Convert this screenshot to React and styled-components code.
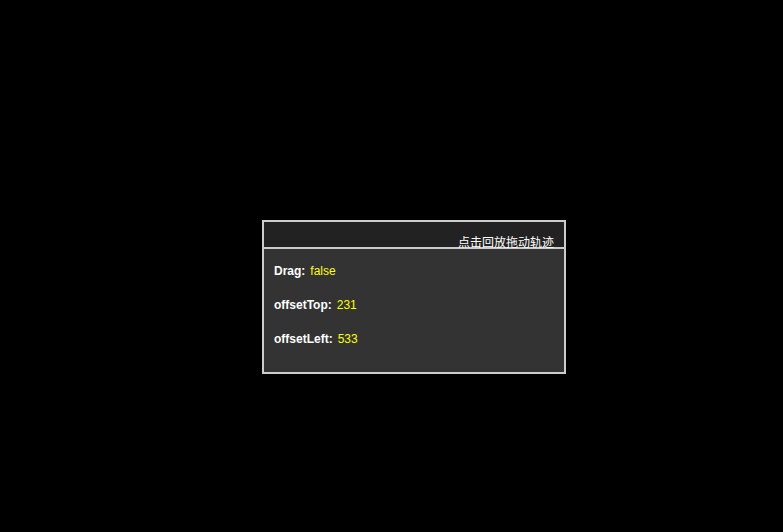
import React from "react";
import styled, { createGlobalStyle } from "styled-components";

const GlobalStyle = createGlobalStyle`
  html, body {
    margin: 0;
    padding: 0;
    background: #000;
    height: 100%;
  }
  body {
    font-family: "Liberation Sans", Arial, "Noto Sans CJK SC", sans-serif;
    font-size: 12px;
  }
`;

const Stage = styled.div`
  position: relative;
  width: 783px;
  height: 532px;
  background: #000;
  overflow: hidden;
`;

const Panel = styled.div`
  position: absolute;
  left: 262px;
  top: 220px;
  width: 300px;
  border: 2px solid #ccc;
  display: flex;
  flex-direction: column;
`;

const Header = styled.div`
  height: 25px;
  background: #222;
  border-bottom: 2px solid #ccc;
  display: flex;
  justify-content: flex-end;
  align-items: flex-end;
  padding-right: 10px;
`;

const Replay = styled.span`
  font-family: "Noto Sans CJK SC", sans-serif;
  font-size: 12px;
  line-height: 12px;
  color: #fff;
  cursor: pointer;
  margin-bottom: -1px;
`;

const Body = styled.div`
  background: #333;
  height: 123px;
  box-sizing: border-box;
  padding: 15px 10px 0;
  display: flex;
  flex-direction: column;
  gap: 20px;
`;

const Row = styled.div`
  line-height: 14px;
  display: flex;
  align-items: center;
`;

const Label = styled.span`
  color: #fff;
  font-weight: bold;
  margin-right: 5px;
`;

const Value = styled.span`
  color: ${(p) => p.color || "#ff0"};
`;

const App = () => {
  const info = [
    { label: "Drag:", value: "false" },
    { label: "offsetTop:", value: "231" },
    { label: "offsetLeft:", value: "533" },
  ];
  return (
    <React.Fragment>
      <GlobalStyle />
      <Stage>
        <Panel>
          <Header>
            <Replay>点击回放拖动轨迹</Replay>
          </Header>
          <Body>
            {info.map((item) => (
              <Row key={item.label}>
                <Label>{item.label}</Label>
                <Value>{item.value}</Value>
              </Row>
            ))}
          </Body>
        </Panel>
      </Stage>
    </React.Fragment>
  );
};

export default App;
